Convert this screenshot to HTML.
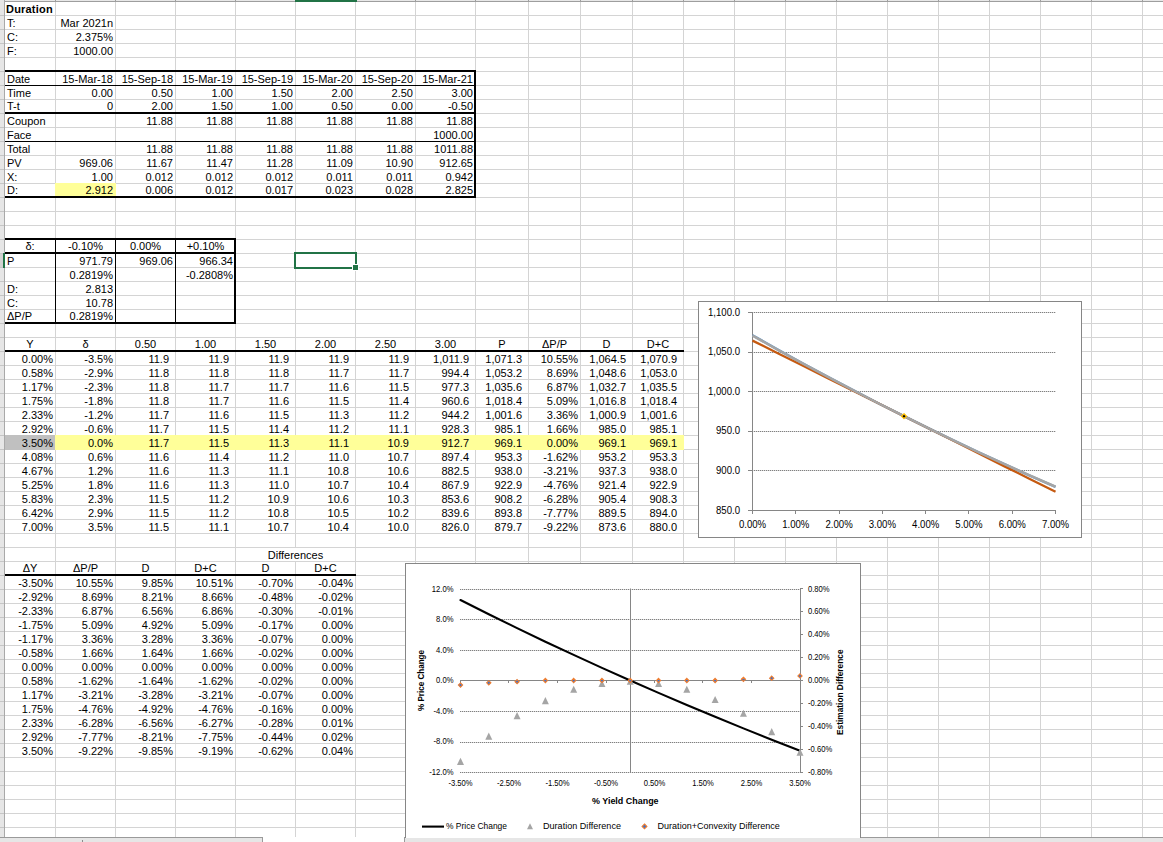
<!DOCTYPE html>
<html><head><meta charset="utf-8"><title>Duration</title>
<style>
html,body{margin:0;padding:0;background:#fff;}
body{width:1163px;height:842px;overflow:hidden;position:relative;}
svg.g{position:absolute;left:0;top:0;}
.t{position:absolute;font-family:"Liberation Sans",sans-serif;font-size:11px;line-height:14px;height:14px;white-space:nowrap;color:#000;}
.ch{position:absolute;}
.ch text{font-family:"Liberation Sans",sans-serif;}
</style></head><body>
<svg class="g" width="1163" height="842" shape-rendering="crispEdges">
<rect x="0" y="0" width="1163" height="1" fill="#e8e8e8"/><rect x="0" y="1" width="1163" height="1" fill="#9e9e9e"/><rect x="55" y="2" width="1" height="835" fill="#d4d4d4"/><rect x="55" y="0" width="1" height="1" fill="#9e9e9e"/><rect x="115" y="2" width="1" height="835" fill="#d4d4d4"/><rect x="115" y="0" width="1" height="1" fill="#9e9e9e"/><rect x="175" y="2" width="1" height="835" fill="#d4d4d4"/><rect x="175" y="0" width="1" height="1" fill="#9e9e9e"/><rect x="235" y="2" width="1" height="835" fill="#d4d4d4"/><rect x="235" y="0" width="1" height="1" fill="#9e9e9e"/><rect x="295" y="2" width="1" height="835" fill="#d4d4d4"/><rect x="295" y="0" width="1" height="1" fill="#9e9e9e"/><rect x="355" y="2" width="1" height="835" fill="#d4d4d4"/><rect x="355" y="0" width="1" height="1" fill="#9e9e9e"/><rect x="415" y="2" width="1" height="835" fill="#d4d4d4"/><rect x="415" y="0" width="1" height="1" fill="#9e9e9e"/><rect x="475" y="2" width="1" height="835" fill="#d4d4d4"/><rect x="475" y="0" width="1" height="1" fill="#9e9e9e"/><rect x="528" y="2" width="1" height="835" fill="#d4d4d4"/><rect x="528" y="0" width="1" height="1" fill="#9e9e9e"/><rect x="580" y="2" width="1" height="835" fill="#d4d4d4"/><rect x="580" y="0" width="1" height="1" fill="#9e9e9e"/><rect x="632" y="2" width="1" height="835" fill="#d4d4d4"/><rect x="632" y="0" width="1" height="1" fill="#9e9e9e"/><rect x="683" y="2" width="1" height="835" fill="#d4d4d4"/><rect x="683" y="0" width="1" height="1" fill="#9e9e9e"/><rect x="734" y="2" width="1" height="835" fill="#d4d4d4"/><rect x="734" y="0" width="1" height="1" fill="#9e9e9e"/><rect x="785" y="2" width="1" height="835" fill="#d4d4d4"/><rect x="785" y="0" width="1" height="1" fill="#9e9e9e"/><rect x="836" y="2" width="1" height="835" fill="#d4d4d4"/><rect x="836" y="0" width="1" height="1" fill="#9e9e9e"/><rect x="887" y="2" width="1" height="835" fill="#d4d4d4"/><rect x="887" y="0" width="1" height="1" fill="#9e9e9e"/><rect x="938" y="2" width="1" height="835" fill="#d4d4d4"/><rect x="938" y="0" width="1" height="1" fill="#9e9e9e"/><rect x="989" y="2" width="1" height="835" fill="#d4d4d4"/><rect x="989" y="0" width="1" height="1" fill="#9e9e9e"/><rect x="1040" y="2" width="1" height="835" fill="#d4d4d4"/><rect x="1040" y="0" width="1" height="1" fill="#9e9e9e"/><rect x="1091" y="2" width="1" height="835" fill="#d4d4d4"/><rect x="1091" y="0" width="1" height="1" fill="#9e9e9e"/><rect x="1142" y="2" width="1" height="835" fill="#d4d4d4"/><rect x="1142" y="0" width="1" height="1" fill="#9e9e9e"/><rect x="5" y="15" width="1158" height="1" fill="#d4d4d4"/><rect x="5" y="29" width="1158" height="1" fill="#d4d4d4"/><rect x="5" y="43" width="1158" height="1" fill="#d4d4d4"/><rect x="5" y="57" width="1158" height="1" fill="#d4d4d4"/><rect x="5" y="71" width="1158" height="1" fill="#d4d4d4"/><rect x="5" y="85" width="1158" height="1" fill="#d4d4d4"/><rect x="5" y="99" width="1158" height="1" fill="#d4d4d4"/><rect x="5" y="113" width="1158" height="1" fill="#d4d4d4"/><rect x="5" y="127" width="1158" height="1" fill="#d4d4d4"/><rect x="5" y="141" width="1158" height="1" fill="#d4d4d4"/><rect x="5" y="155" width="1158" height="1" fill="#d4d4d4"/><rect x="5" y="169" width="1158" height="1" fill="#d4d4d4"/><rect x="5" y="183" width="1158" height="1" fill="#d4d4d4"/><rect x="5" y="197" width="1158" height="1" fill="#d4d4d4"/><rect x="5" y="211" width="1158" height="1" fill="#d4d4d4"/><rect x="5" y="225" width="1158" height="1" fill="#d4d4d4"/><rect x="5" y="239" width="1158" height="1" fill="#d4d4d4"/><rect x="5" y="253" width="1158" height="1" fill="#d4d4d4"/><rect x="5" y="267" width="1158" height="1" fill="#d4d4d4"/><rect x="5" y="281" width="1158" height="1" fill="#d4d4d4"/><rect x="5" y="295" width="1158" height="1" fill="#d4d4d4"/><rect x="5" y="309" width="1158" height="1" fill="#d4d4d4"/><rect x="5" y="323" width="1158" height="1" fill="#d4d4d4"/><rect x="5" y="337" width="1158" height="1" fill="#d4d4d4"/><rect x="5" y="351" width="1158" height="1" fill="#d4d4d4"/><rect x="5" y="365" width="1158" height="1" fill="#d4d4d4"/><rect x="5" y="379" width="1158" height="1" fill="#d4d4d4"/><rect x="5" y="393" width="1158" height="1" fill="#d4d4d4"/><rect x="5" y="407" width="1158" height="1" fill="#d4d4d4"/><rect x="5" y="421" width="1158" height="1" fill="#d4d4d4"/><rect x="5" y="435" width="1158" height="1" fill="#d4d4d4"/><rect x="5" y="449" width="1158" height="1" fill="#d4d4d4"/><rect x="5" y="463" width="1158" height="1" fill="#d4d4d4"/><rect x="5" y="477" width="1158" height="1" fill="#d4d4d4"/><rect x="5" y="491" width="1158" height="1" fill="#d4d4d4"/><rect x="5" y="505" width="1158" height="1" fill="#d4d4d4"/><rect x="5" y="519" width="1158" height="1" fill="#d4d4d4"/><rect x="5" y="533" width="1158" height="1" fill="#d4d4d4"/><rect x="5" y="547" width="1158" height="1" fill="#d4d4d4"/><rect x="5" y="561" width="1158" height="1" fill="#d4d4d4"/><rect x="5" y="575" width="1158" height="1" fill="#d4d4d4"/><rect x="5" y="589" width="1158" height="1" fill="#d4d4d4"/><rect x="5" y="603" width="1158" height="1" fill="#d4d4d4"/><rect x="5" y="617" width="1158" height="1" fill="#d4d4d4"/><rect x="5" y="631" width="1158" height="1" fill="#d4d4d4"/><rect x="5" y="645" width="1158" height="1" fill="#d4d4d4"/><rect x="5" y="659" width="1158" height="1" fill="#d4d4d4"/><rect x="5" y="673" width="1158" height="1" fill="#d4d4d4"/><rect x="5" y="687" width="1158" height="1" fill="#d4d4d4"/><rect x="5" y="701" width="1158" height="1" fill="#d4d4d4"/><rect x="5" y="715" width="1158" height="1" fill="#d4d4d4"/><rect x="5" y="729" width="1158" height="1" fill="#d4d4d4"/><rect x="5" y="743" width="1158" height="1" fill="#d4d4d4"/><rect x="5" y="757" width="1158" height="1" fill="#d4d4d4"/><rect x="5" y="771" width="1158" height="1" fill="#d4d4d4"/><rect x="5" y="785" width="1158" height="1" fill="#d4d4d4"/><rect x="5" y="799" width="1158" height="1" fill="#d4d4d4"/><rect x="5" y="813" width="1158" height="1" fill="#d4d4d4"/><rect x="5" y="827" width="1158" height="1" fill="#d4d4d4"/><rect x="0" y="0" width="4" height="837" fill="#e6e6e6"/><rect x="0" y="253" width="3" height="15" fill="#d2d2d2"/><rect x="0" y="15" width="4" height="1" fill="#c6c6c6"/><rect x="0" y="29" width="4" height="1" fill="#c6c6c6"/><rect x="0" y="43" width="4" height="1" fill="#c6c6c6"/><rect x="0" y="57" width="4" height="1" fill="#c6c6c6"/><rect x="0" y="71" width="4" height="1" fill="#c6c6c6"/><rect x="0" y="85" width="4" height="1" fill="#c6c6c6"/><rect x="0" y="99" width="4" height="1" fill="#c6c6c6"/><rect x="0" y="113" width="4" height="1" fill="#c6c6c6"/><rect x="0" y="127" width="4" height="1" fill="#c6c6c6"/><rect x="0" y="141" width="4" height="1" fill="#c6c6c6"/><rect x="0" y="155" width="4" height="1" fill="#c6c6c6"/><rect x="0" y="169" width="4" height="1" fill="#c6c6c6"/><rect x="0" y="183" width="4" height="1" fill="#c6c6c6"/><rect x="0" y="197" width="4" height="1" fill="#c6c6c6"/><rect x="0" y="211" width="4" height="1" fill="#c6c6c6"/><rect x="0" y="225" width="4" height="1" fill="#c6c6c6"/><rect x="0" y="239" width="4" height="1" fill="#c6c6c6"/><rect x="0" y="253" width="4" height="1" fill="#c6c6c6"/><rect x="0" y="267" width="4" height="1" fill="#c6c6c6"/><rect x="0" y="281" width="4" height="1" fill="#c6c6c6"/><rect x="0" y="295" width="4" height="1" fill="#c6c6c6"/><rect x="0" y="309" width="4" height="1" fill="#c6c6c6"/><rect x="0" y="323" width="4" height="1" fill="#c6c6c6"/><rect x="0" y="337" width="4" height="1" fill="#c6c6c6"/><rect x="0" y="351" width="4" height="1" fill="#c6c6c6"/><rect x="0" y="365" width="4" height="1" fill="#c6c6c6"/><rect x="0" y="379" width="4" height="1" fill="#c6c6c6"/><rect x="0" y="393" width="4" height="1" fill="#c6c6c6"/><rect x="0" y="407" width="4" height="1" fill="#c6c6c6"/><rect x="0" y="421" width="4" height="1" fill="#c6c6c6"/><rect x="0" y="435" width="4" height="1" fill="#c6c6c6"/><rect x="0" y="449" width="4" height="1" fill="#c6c6c6"/><rect x="0" y="463" width="4" height="1" fill="#c6c6c6"/><rect x="0" y="477" width="4" height="1" fill="#c6c6c6"/><rect x="0" y="491" width="4" height="1" fill="#c6c6c6"/><rect x="0" y="505" width="4" height="1" fill="#c6c6c6"/><rect x="0" y="519" width="4" height="1" fill="#c6c6c6"/><rect x="0" y="533" width="4" height="1" fill="#c6c6c6"/><rect x="0" y="547" width="4" height="1" fill="#c6c6c6"/><rect x="0" y="561" width="4" height="1" fill="#c6c6c6"/><rect x="0" y="575" width="4" height="1" fill="#c6c6c6"/><rect x="0" y="589" width="4" height="1" fill="#c6c6c6"/><rect x="0" y="603" width="4" height="1" fill="#c6c6c6"/><rect x="0" y="617" width="4" height="1" fill="#c6c6c6"/><rect x="0" y="631" width="4" height="1" fill="#c6c6c6"/><rect x="0" y="645" width="4" height="1" fill="#c6c6c6"/><rect x="0" y="659" width="4" height="1" fill="#c6c6c6"/><rect x="0" y="673" width="4" height="1" fill="#c6c6c6"/><rect x="0" y="687" width="4" height="1" fill="#c6c6c6"/><rect x="0" y="701" width="4" height="1" fill="#c6c6c6"/><rect x="0" y="715" width="4" height="1" fill="#c6c6c6"/><rect x="0" y="729" width="4" height="1" fill="#c6c6c6"/><rect x="0" y="743" width="4" height="1" fill="#c6c6c6"/><rect x="0" y="757" width="4" height="1" fill="#c6c6c6"/><rect x="0" y="771" width="4" height="1" fill="#c6c6c6"/><rect x="0" y="785" width="4" height="1" fill="#c6c6c6"/><rect x="0" y="799" width="4" height="1" fill="#c6c6c6"/><rect x="0" y="813" width="4" height="1" fill="#c6c6c6"/><rect x="0" y="827" width="4" height="1" fill="#c6c6c6"/><rect x="4" y="0" width="1" height="837" fill="#a9a9a9"/><rect x="3" y="253" width="2" height="15" fill="#217346"/><rect x="295" y="0" width="62" height="2" fill="#217346"/><rect x="55" y="183" width="61" height="15" fill="#ffff99"/><rect x="5" y="435" width="50" height="15" fill="#c0c0c0"/><rect x="55" y="435" width="629" height="15" fill="#ffff99"/><rect x="5" y="70" width="471" height="2" fill="#000"/><rect x="5" y="85" width="471" height="1" fill="#000"/><rect x="5" y="112" width="471" height="2" fill="#000"/><rect x="5" y="141" width="471" height="1" fill="#000"/><rect x="5" y="196" width="471" height="2" fill="#000"/><rect x="474" y="70" width="2" height="128" fill="#000"/><rect x="5" y="238" width="231" height="2" fill="#000"/><rect x="5" y="252" width="231" height="2" fill="#000"/><rect x="5" y="322" width="231" height="2" fill="#000"/><rect x="234" y="238" width="2" height="86" fill="#000"/><rect x="55" y="239" width="1" height="84" fill="#000"/><rect x="115" y="239" width="1" height="84" fill="#000"/><rect x="175" y="239" width="1" height="84" fill="#000"/><rect x="294" y="252" width="63" height="2" fill="#217346"/><rect x="294" y="252" width="2" height="17" fill="#217346"/><rect x="355" y="252" width="2" height="12" fill="#217346"/><rect x="294" y="267" width="58" height="2" fill="#217346"/><rect x="352" y="264" width="7" height="7" fill="#ffffff"/><rect x="353" y="265" width="5" height="5" fill="#217346"/><rect x="5" y="350" width="679" height="2" fill="#000"/><rect x="295" y="548" width="1" height="13" fill="#ffffff"/><rect x="5" y="574" width="351" height="2" fill="#000"/><rect x="0" y="837" width="1163" height="5" fill="#ffffff"/><rect x="0" y="837" width="263" height="5" fill="#e6e6e6"/><rect x="0" y="837" width="263" height="1" fill="#9a9a9a"/><rect x="262" y="837" width="1" height="5" fill="#9a9a9a"/><rect x="404" y="837" width="759" height="5" fill="#e6e6e6"/><rect x="404" y="837" width="759" height="1" fill="#9a9a9a"/><rect x="404" y="837" width="1" height="5" fill="#9a9a9a"/><rect x="82" y="840" width="1" height="2" fill="#8c8c8c"/>
</svg>
<div class="t" style="left:7px;top:2px;width:51px;text-align:left;font-weight:bold;letter-spacing:0.2px;left:6px;">Duration</div><div class="t" style="left:7px;top:16px;width:51px;text-align:left;">T:</div><div class="t" style="left:56px;top:16px;width:57px;text-align:right;">Mar 2021n</div><div class="t" style="left:7px;top:30px;width:51px;text-align:left;">C:</div><div class="t" style="left:56px;top:30px;width:57px;text-align:right;">2.375%</div><div class="t" style="left:7px;top:44px;width:51px;text-align:left;">F:</div><div class="t" style="left:56px;top:44px;width:57px;text-align:right;">1000.00</div><div class="t" style="left:7px;top:72px;width:51px;text-align:left;">Date</div><div class="t" style="left:56px;top:72px;width:57px;text-align:right;">15-Mar-18</div><div class="t" style="left:116px;top:72px;width:57px;text-align:right;">15-Sep-18</div><div class="t" style="left:176px;top:72px;width:57px;text-align:right;">15-Mar-19</div><div class="t" style="left:236px;top:72px;width:57px;text-align:right;">15-Sep-19</div><div class="t" style="left:296px;top:72px;width:57px;text-align:right;">15-Mar-20</div><div class="t" style="left:356px;top:72px;width:57px;text-align:right;">15-Sep-20</div><div class="t" style="left:416px;top:72px;width:57px;text-align:right;">15-Mar-21</div><div class="t" style="left:7px;top:86px;width:51px;text-align:left;">Time</div><div class="t" style="left:56px;top:86px;width:57px;text-align:right;">0.00</div><div class="t" style="left:116px;top:86px;width:57px;text-align:right;">0.50</div><div class="t" style="left:176px;top:86px;width:57px;text-align:right;">1.00</div><div class="t" style="left:236px;top:86px;width:57px;text-align:right;">1.50</div><div class="t" style="left:296px;top:86px;width:57px;text-align:right;">2.00</div><div class="t" style="left:356px;top:86px;width:57px;text-align:right;">2.50</div><div class="t" style="left:416px;top:86px;width:57px;text-align:right;">3.00</div><div class="t" style="left:7px;top:99px;width:51px;text-align:left;">T-t</div><div class="t" style="left:56px;top:99px;width:57px;text-align:right;">0</div><div class="t" style="left:116px;top:99px;width:57px;text-align:right;">2.00</div><div class="t" style="left:176px;top:99px;width:57px;text-align:right;">1.50</div><div class="t" style="left:236px;top:99px;width:57px;text-align:right;">1.00</div><div class="t" style="left:296px;top:99px;width:57px;text-align:right;">0.50</div><div class="t" style="left:356px;top:99px;width:57px;text-align:right;">0.00</div><div class="t" style="left:416px;top:99px;width:57px;text-align:right;">-0.50</div><div class="t" style="left:7px;top:114px;width:51px;text-align:left;">Coupon</div><div class="t" style="left:116px;top:114px;width:57px;text-align:right;">11.88</div><div class="t" style="left:176px;top:114px;width:57px;text-align:right;">11.88</div><div class="t" style="left:236px;top:114px;width:57px;text-align:right;">11.88</div><div class="t" style="left:296px;top:114px;width:57px;text-align:right;">11.88</div><div class="t" style="left:356px;top:114px;width:57px;text-align:right;">11.88</div><div class="t" style="left:416px;top:114px;width:57px;text-align:right;">11.88</div><div class="t" style="left:7px;top:128px;width:51px;text-align:left;">Face</div><div class="t" style="left:416px;top:128px;width:57px;text-align:right;">1000.00</div><div class="t" style="left:7px;top:142px;width:51px;text-align:left;">Total</div><div class="t" style="left:116px;top:142px;width:57px;text-align:right;">11.88</div><div class="t" style="left:176px;top:142px;width:57px;text-align:right;">11.88</div><div class="t" style="left:236px;top:142px;width:57px;text-align:right;">11.88</div><div class="t" style="left:296px;top:142px;width:57px;text-align:right;">11.88</div><div class="t" style="left:356px;top:142px;width:57px;text-align:right;">11.88</div><div class="t" style="left:416px;top:142px;width:57px;text-align:right;">1011.88</div><div class="t" style="left:7px;top:156px;width:51px;text-align:left;">PV</div><div class="t" style="left:56px;top:156px;width:57px;text-align:right;">969.06</div><div class="t" style="left:116px;top:156px;width:57px;text-align:right;">11.67</div><div class="t" style="left:176px;top:156px;width:57px;text-align:right;">11.47</div><div class="t" style="left:236px;top:156px;width:57px;text-align:right;">11.28</div><div class="t" style="left:296px;top:156px;width:57px;text-align:right;">11.09</div><div class="t" style="left:356px;top:156px;width:57px;text-align:right;">10.90</div><div class="t" style="left:416px;top:156px;width:57px;text-align:right;">912.65</div><div class="t" style="left:7px;top:170px;width:51px;text-align:left;">X:</div><div class="t" style="left:56px;top:170px;width:57px;text-align:right;">1.00</div><div class="t" style="left:116px;top:170px;width:57px;text-align:right;">0.012</div><div class="t" style="left:176px;top:170px;width:57px;text-align:right;">0.012</div><div class="t" style="left:236px;top:170px;width:57px;text-align:right;">0.012</div><div class="t" style="left:296px;top:170px;width:57px;text-align:right;">0.011</div><div class="t" style="left:356px;top:170px;width:57px;text-align:right;">0.011</div><div class="t" style="left:416px;top:170px;width:57px;text-align:right;">0.942</div><div class="t" style="left:7px;top:183px;width:51px;text-align:left;">D:</div><div class="t" style="left:56px;top:183px;width:57px;text-align:right;">2.912</div><div class="t" style="left:116px;top:183px;width:57px;text-align:right;">0.006</div><div class="t" style="left:176px;top:183px;width:57px;text-align:right;">0.012</div><div class="t" style="left:236px;top:183px;width:57px;text-align:right;">0.017</div><div class="t" style="left:296px;top:183px;width:57px;text-align:right;">0.023</div><div class="t" style="left:356px;top:183px;width:57px;text-align:right;">0.028</div><div class="t" style="left:416px;top:183px;width:57px;text-align:right;">2.825</div><div class="t" style="left:5px;top:239px;width:50px;text-align:center;">&#948;:</div><div class="t" style="left:56px;top:239px;width:59px;text-align:center;">-0.10%</div><div class="t" style="left:116px;top:239px;width:59px;text-align:center;">0.00%</div><div class="t" style="left:176px;top:239px;width:59px;text-align:center;">+0.10%</div><div class="t" style="left:7px;top:254px;width:51px;text-align:left;">P</div><div class="t" style="left:56px;top:254px;width:57px;text-align:right;">971.79</div><div class="t" style="left:116px;top:254px;width:57px;text-align:right;">969.06</div><div class="t" style="left:176px;top:254px;width:57px;text-align:right;">966.34</div><div class="t" style="left:56px;top:268px;width:57px;text-align:right;">0.2819%</div><div class="t" style="left:176px;top:268px;width:57px;text-align:right;">-0.2808%</div><div class="t" style="left:7px;top:282px;width:51px;text-align:left;">D:</div><div class="t" style="left:56px;top:282px;width:57px;text-align:right;">2.813</div><div class="t" style="left:7px;top:296px;width:51px;text-align:left;">C:</div><div class="t" style="left:56px;top:296px;width:57px;text-align:right;">10.78</div><div class="t" style="left:7px;top:309px;width:51px;text-align:left;">&#916;P/P</div><div class="t" style="left:56px;top:309px;width:57px;text-align:right;">0.2819%</div><div class="t" style="left:5px;top:337px;width:50px;text-align:center;">Y</div><div class="t" style="left:56px;top:337px;width:59px;text-align:center;">&#948;</div><div class="t" style="left:116px;top:337px;width:59px;text-align:center;">0.50</div><div class="t" style="left:176px;top:337px;width:59px;text-align:center;">1.00</div><div class="t" style="left:236px;top:337px;width:59px;text-align:center;">1.50</div><div class="t" style="left:296px;top:337px;width:59px;text-align:center;">2.00</div><div class="t" style="left:356px;top:337px;width:59px;text-align:center;">2.50</div><div class="t" style="left:416px;top:337px;width:59px;text-align:center;">3.00</div><div class="t" style="left:476px;top:337px;width:52px;text-align:center;">P</div><div class="t" style="left:529px;top:337px;width:51px;text-align:center;">&#916;P/P</div><div class="t" style="left:581px;top:337px;width:51px;text-align:center;">D</div><div class="t" style="left:633px;top:337px;width:50px;text-align:center;">D+C</div><div class="t" style="left:5px;top:352px;width:48px;text-align:right;">0.00%</div><div class="t" style="left:56px;top:352px;width:57px;text-align:right;">-3.5%</div><div class="t" style="left:116px;top:352px;width:53px;text-align:right;">11.9</div><div class="t" style="left:176px;top:352px;width:53px;text-align:right;">11.9</div><div class="t" style="left:236px;top:352px;width:53px;text-align:right;">11.9</div><div class="t" style="left:296px;top:352px;width:53px;text-align:right;">11.9</div><div class="t" style="left:356px;top:352px;width:53px;text-align:right;">11.9</div><div class="t" style="left:416px;top:352px;width:53px;text-align:right;">1,011.9</div><div class="t" style="left:476px;top:352px;width:46px;text-align:right;">1,071.3</div><div class="t" style="left:529px;top:352px;width:49px;text-align:right;">10.55%</div><div class="t" style="left:581px;top:352px;width:45px;text-align:right;">1,064.5</div><div class="t" style="left:633px;top:352px;width:44px;text-align:right;">1,070.9</div><div class="t" style="left:5px;top:366px;width:48px;text-align:right;">0.58%</div><div class="t" style="left:56px;top:366px;width:57px;text-align:right;">-2.9%</div><div class="t" style="left:116px;top:366px;width:53px;text-align:right;">11.8</div><div class="t" style="left:176px;top:366px;width:53px;text-align:right;">11.8</div><div class="t" style="left:236px;top:366px;width:53px;text-align:right;">11.8</div><div class="t" style="left:296px;top:366px;width:53px;text-align:right;">11.7</div><div class="t" style="left:356px;top:366px;width:53px;text-align:right;">11.7</div><div class="t" style="left:416px;top:366px;width:53px;text-align:right;">994.4</div><div class="t" style="left:476px;top:366px;width:46px;text-align:right;">1,053.2</div><div class="t" style="left:529px;top:366px;width:49px;text-align:right;">8.69%</div><div class="t" style="left:581px;top:366px;width:45px;text-align:right;">1,048.6</div><div class="t" style="left:633px;top:366px;width:44px;text-align:right;">1,053.0</div><div class="t" style="left:5px;top:380px;width:48px;text-align:right;">1.17%</div><div class="t" style="left:56px;top:380px;width:57px;text-align:right;">-2.3%</div><div class="t" style="left:116px;top:380px;width:53px;text-align:right;">11.8</div><div class="t" style="left:176px;top:380px;width:53px;text-align:right;">11.7</div><div class="t" style="left:236px;top:380px;width:53px;text-align:right;">11.7</div><div class="t" style="left:296px;top:380px;width:53px;text-align:right;">11.6</div><div class="t" style="left:356px;top:380px;width:53px;text-align:right;">11.5</div><div class="t" style="left:416px;top:380px;width:53px;text-align:right;">977.3</div><div class="t" style="left:476px;top:380px;width:46px;text-align:right;">1,035.6</div><div class="t" style="left:529px;top:380px;width:49px;text-align:right;">6.87%</div><div class="t" style="left:581px;top:380px;width:45px;text-align:right;">1,032.7</div><div class="t" style="left:633px;top:380px;width:44px;text-align:right;">1,035.5</div><div class="t" style="left:5px;top:394px;width:48px;text-align:right;">1.75%</div><div class="t" style="left:56px;top:394px;width:57px;text-align:right;">-1.8%</div><div class="t" style="left:116px;top:394px;width:53px;text-align:right;">11.8</div><div class="t" style="left:176px;top:394px;width:53px;text-align:right;">11.7</div><div class="t" style="left:236px;top:394px;width:53px;text-align:right;">11.6</div><div class="t" style="left:296px;top:394px;width:53px;text-align:right;">11.5</div><div class="t" style="left:356px;top:394px;width:53px;text-align:right;">11.4</div><div class="t" style="left:416px;top:394px;width:53px;text-align:right;">960.6</div><div class="t" style="left:476px;top:394px;width:46px;text-align:right;">1,018.4</div><div class="t" style="left:529px;top:394px;width:49px;text-align:right;">5.09%</div><div class="t" style="left:581px;top:394px;width:45px;text-align:right;">1,016.8</div><div class="t" style="left:633px;top:394px;width:44px;text-align:right;">1,018.4</div><div class="t" style="left:5px;top:408px;width:48px;text-align:right;">2.33%</div><div class="t" style="left:56px;top:408px;width:57px;text-align:right;">-1.2%</div><div class="t" style="left:116px;top:408px;width:53px;text-align:right;">11.7</div><div class="t" style="left:176px;top:408px;width:53px;text-align:right;">11.6</div><div class="t" style="left:236px;top:408px;width:53px;text-align:right;">11.5</div><div class="t" style="left:296px;top:408px;width:53px;text-align:right;">11.3</div><div class="t" style="left:356px;top:408px;width:53px;text-align:right;">11.2</div><div class="t" style="left:416px;top:408px;width:53px;text-align:right;">944.2</div><div class="t" style="left:476px;top:408px;width:46px;text-align:right;">1,001.6</div><div class="t" style="left:529px;top:408px;width:49px;text-align:right;">3.36%</div><div class="t" style="left:581px;top:408px;width:45px;text-align:right;">1,000.9</div><div class="t" style="left:633px;top:408px;width:44px;text-align:right;">1,001.6</div><div class="t" style="left:5px;top:422px;width:48px;text-align:right;">2.92%</div><div class="t" style="left:56px;top:422px;width:57px;text-align:right;">-0.6%</div><div class="t" style="left:116px;top:422px;width:53px;text-align:right;">11.7</div><div class="t" style="left:176px;top:422px;width:53px;text-align:right;">11.5</div><div class="t" style="left:236px;top:422px;width:53px;text-align:right;">11.4</div><div class="t" style="left:296px;top:422px;width:53px;text-align:right;">11.2</div><div class="t" style="left:356px;top:422px;width:53px;text-align:right;">11.1</div><div class="t" style="left:416px;top:422px;width:53px;text-align:right;">928.3</div><div class="t" style="left:476px;top:422px;width:46px;text-align:right;">985.1</div><div class="t" style="left:529px;top:422px;width:49px;text-align:right;">1.66%</div><div class="t" style="left:581px;top:422px;width:45px;text-align:right;">985.0</div><div class="t" style="left:633px;top:422px;width:44px;text-align:right;">985.1</div><div class="t" style="left:5px;top:436px;width:48px;text-align:right;">3.50%</div><div class="t" style="left:56px;top:436px;width:57px;text-align:right;">0.0%</div><div class="t" style="left:116px;top:436px;width:53px;text-align:right;">11.7</div><div class="t" style="left:176px;top:436px;width:53px;text-align:right;">11.5</div><div class="t" style="left:236px;top:436px;width:53px;text-align:right;">11.3</div><div class="t" style="left:296px;top:436px;width:53px;text-align:right;">11.1</div><div class="t" style="left:356px;top:436px;width:53px;text-align:right;">10.9</div><div class="t" style="left:416px;top:436px;width:53px;text-align:right;">912.7</div><div class="t" style="left:476px;top:436px;width:46px;text-align:right;">969.1</div><div class="t" style="left:529px;top:436px;width:49px;text-align:right;">0.00%</div><div class="t" style="left:581px;top:436px;width:45px;text-align:right;">969.1</div><div class="t" style="left:633px;top:436px;width:44px;text-align:right;">969.1</div><div class="t" style="left:5px;top:450px;width:48px;text-align:right;">4.08%</div><div class="t" style="left:56px;top:450px;width:57px;text-align:right;">0.6%</div><div class="t" style="left:116px;top:450px;width:53px;text-align:right;">11.6</div><div class="t" style="left:176px;top:450px;width:53px;text-align:right;">11.4</div><div class="t" style="left:236px;top:450px;width:53px;text-align:right;">11.2</div><div class="t" style="left:296px;top:450px;width:53px;text-align:right;">11.0</div><div class="t" style="left:356px;top:450px;width:53px;text-align:right;">10.7</div><div class="t" style="left:416px;top:450px;width:53px;text-align:right;">897.4</div><div class="t" style="left:476px;top:450px;width:46px;text-align:right;">953.3</div><div class="t" style="left:529px;top:450px;width:49px;text-align:right;">-1.62%</div><div class="t" style="left:581px;top:450px;width:45px;text-align:right;">953.2</div><div class="t" style="left:633px;top:450px;width:44px;text-align:right;">953.3</div><div class="t" style="left:5px;top:464px;width:48px;text-align:right;">4.67%</div><div class="t" style="left:56px;top:464px;width:57px;text-align:right;">1.2%</div><div class="t" style="left:116px;top:464px;width:53px;text-align:right;">11.6</div><div class="t" style="left:176px;top:464px;width:53px;text-align:right;">11.3</div><div class="t" style="left:236px;top:464px;width:53px;text-align:right;">11.1</div><div class="t" style="left:296px;top:464px;width:53px;text-align:right;">10.8</div><div class="t" style="left:356px;top:464px;width:53px;text-align:right;">10.6</div><div class="t" style="left:416px;top:464px;width:53px;text-align:right;">882.5</div><div class="t" style="left:476px;top:464px;width:46px;text-align:right;">938.0</div><div class="t" style="left:529px;top:464px;width:49px;text-align:right;">-3.21%</div><div class="t" style="left:581px;top:464px;width:45px;text-align:right;">937.3</div><div class="t" style="left:633px;top:464px;width:44px;text-align:right;">938.0</div><div class="t" style="left:5px;top:478px;width:48px;text-align:right;">5.25%</div><div class="t" style="left:56px;top:478px;width:57px;text-align:right;">1.8%</div><div class="t" style="left:116px;top:478px;width:53px;text-align:right;">11.6</div><div class="t" style="left:176px;top:478px;width:53px;text-align:right;">11.3</div><div class="t" style="left:236px;top:478px;width:53px;text-align:right;">11.0</div><div class="t" style="left:296px;top:478px;width:53px;text-align:right;">10.7</div><div class="t" style="left:356px;top:478px;width:53px;text-align:right;">10.4</div><div class="t" style="left:416px;top:478px;width:53px;text-align:right;">867.9</div><div class="t" style="left:476px;top:478px;width:46px;text-align:right;">922.9</div><div class="t" style="left:529px;top:478px;width:49px;text-align:right;">-4.76%</div><div class="t" style="left:581px;top:478px;width:45px;text-align:right;">921.4</div><div class="t" style="left:633px;top:478px;width:44px;text-align:right;">922.9</div><div class="t" style="left:5px;top:492px;width:48px;text-align:right;">5.83%</div><div class="t" style="left:56px;top:492px;width:57px;text-align:right;">2.3%</div><div class="t" style="left:116px;top:492px;width:53px;text-align:right;">11.5</div><div class="t" style="left:176px;top:492px;width:53px;text-align:right;">11.2</div><div class="t" style="left:236px;top:492px;width:53px;text-align:right;">10.9</div><div class="t" style="left:296px;top:492px;width:53px;text-align:right;">10.6</div><div class="t" style="left:356px;top:492px;width:53px;text-align:right;">10.3</div><div class="t" style="left:416px;top:492px;width:53px;text-align:right;">853.6</div><div class="t" style="left:476px;top:492px;width:46px;text-align:right;">908.2</div><div class="t" style="left:529px;top:492px;width:49px;text-align:right;">-6.28%</div><div class="t" style="left:581px;top:492px;width:45px;text-align:right;">905.4</div><div class="t" style="left:633px;top:492px;width:44px;text-align:right;">908.3</div><div class="t" style="left:5px;top:506px;width:48px;text-align:right;">6.42%</div><div class="t" style="left:56px;top:506px;width:57px;text-align:right;">2.9%</div><div class="t" style="left:116px;top:506px;width:53px;text-align:right;">11.5</div><div class="t" style="left:176px;top:506px;width:53px;text-align:right;">11.2</div><div class="t" style="left:236px;top:506px;width:53px;text-align:right;">10.8</div><div class="t" style="left:296px;top:506px;width:53px;text-align:right;">10.5</div><div class="t" style="left:356px;top:506px;width:53px;text-align:right;">10.2</div><div class="t" style="left:416px;top:506px;width:53px;text-align:right;">839.6</div><div class="t" style="left:476px;top:506px;width:46px;text-align:right;">893.8</div><div class="t" style="left:529px;top:506px;width:49px;text-align:right;">-7.77%</div><div class="t" style="left:581px;top:506px;width:45px;text-align:right;">889.5</div><div class="t" style="left:633px;top:506px;width:44px;text-align:right;">894.0</div><div class="t" style="left:5px;top:520px;width:48px;text-align:right;">7.00%</div><div class="t" style="left:56px;top:520px;width:57px;text-align:right;">3.5%</div><div class="t" style="left:116px;top:520px;width:53px;text-align:right;">11.5</div><div class="t" style="left:176px;top:520px;width:53px;text-align:right;">11.1</div><div class="t" style="left:236px;top:520px;width:53px;text-align:right;">10.7</div><div class="t" style="left:296px;top:520px;width:53px;text-align:right;">10.4</div><div class="t" style="left:356px;top:520px;width:53px;text-align:right;">10.0</div><div class="t" style="left:416px;top:520px;width:53px;text-align:right;">826.0</div><div class="t" style="left:476px;top:520px;width:46px;text-align:right;">879.7</div><div class="t" style="left:529px;top:520px;width:49px;text-align:right;">-9.22%</div><div class="t" style="left:581px;top:520px;width:45px;text-align:right;">873.6</div><div class="t" style="left:633px;top:520px;width:44px;text-align:right;">880.0</div><div class="t" style="left:236px;top:548px;width:119px;text-align:center;">Differences</div><div class="t" style="left:5px;top:561px;width:50px;text-align:center;">&#916;Y</div><div class="t" style="left:56px;top:561px;width:59px;text-align:center;">&#916;P/P</div><div class="t" style="left:116px;top:561px;width:59px;text-align:center;">D</div><div class="t" style="left:176px;top:561px;width:59px;text-align:center;">D+C</div><div class="t" style="left:236px;top:561px;width:59px;text-align:center;">D</div><div class="t" style="left:296px;top:561px;width:59px;text-align:center;">D+C</div><div class="t" style="left:5px;top:576px;width:48px;text-align:right;">-3.50%</div><div class="t" style="left:56px;top:576px;width:57px;text-align:right;">10.55%</div><div class="t" style="left:116px;top:576px;width:57px;text-align:right;">9.85%</div><div class="t" style="left:176px;top:576px;width:57px;text-align:right;">10.51%</div><div class="t" style="left:236px;top:576px;width:57px;text-align:right;">-0.70%</div><div class="t" style="left:296px;top:576px;width:57px;text-align:right;">-0.04%</div><div class="t" style="left:5px;top:590px;width:48px;text-align:right;">-2.92%</div><div class="t" style="left:56px;top:590px;width:57px;text-align:right;">8.69%</div><div class="t" style="left:116px;top:590px;width:57px;text-align:right;">8.21%</div><div class="t" style="left:176px;top:590px;width:57px;text-align:right;">8.66%</div><div class="t" style="left:236px;top:590px;width:57px;text-align:right;">-0.48%</div><div class="t" style="left:296px;top:590px;width:57px;text-align:right;">-0.02%</div><div class="t" style="left:5px;top:604px;width:48px;text-align:right;">-2.33%</div><div class="t" style="left:56px;top:604px;width:57px;text-align:right;">6.87%</div><div class="t" style="left:116px;top:604px;width:57px;text-align:right;">6.56%</div><div class="t" style="left:176px;top:604px;width:57px;text-align:right;">6.86%</div><div class="t" style="left:236px;top:604px;width:57px;text-align:right;">-0.30%</div><div class="t" style="left:296px;top:604px;width:57px;text-align:right;">-0.01%</div><div class="t" style="left:5px;top:618px;width:48px;text-align:right;">-1.75%</div><div class="t" style="left:56px;top:618px;width:57px;text-align:right;">5.09%</div><div class="t" style="left:116px;top:618px;width:57px;text-align:right;">4.92%</div><div class="t" style="left:176px;top:618px;width:57px;text-align:right;">5.09%</div><div class="t" style="left:236px;top:618px;width:57px;text-align:right;">-0.17%</div><div class="t" style="left:296px;top:618px;width:57px;text-align:right;">0.00%</div><div class="t" style="left:5px;top:632px;width:48px;text-align:right;">-1.17%</div><div class="t" style="left:56px;top:632px;width:57px;text-align:right;">3.36%</div><div class="t" style="left:116px;top:632px;width:57px;text-align:right;">3.28%</div><div class="t" style="left:176px;top:632px;width:57px;text-align:right;">3.36%</div><div class="t" style="left:236px;top:632px;width:57px;text-align:right;">-0.07%</div><div class="t" style="left:296px;top:632px;width:57px;text-align:right;">0.00%</div><div class="t" style="left:5px;top:646px;width:48px;text-align:right;">-0.58%</div><div class="t" style="left:56px;top:646px;width:57px;text-align:right;">1.66%</div><div class="t" style="left:116px;top:646px;width:57px;text-align:right;">1.64%</div><div class="t" style="left:176px;top:646px;width:57px;text-align:right;">1.66%</div><div class="t" style="left:236px;top:646px;width:57px;text-align:right;">-0.02%</div><div class="t" style="left:296px;top:646px;width:57px;text-align:right;">0.00%</div><div class="t" style="left:5px;top:660px;width:48px;text-align:right;">0.00%</div><div class="t" style="left:56px;top:660px;width:57px;text-align:right;">0.00%</div><div class="t" style="left:116px;top:660px;width:57px;text-align:right;">0.00%</div><div class="t" style="left:176px;top:660px;width:57px;text-align:right;">0.00%</div><div class="t" style="left:236px;top:660px;width:57px;text-align:right;">0.00%</div><div class="t" style="left:296px;top:660px;width:57px;text-align:right;">0.00%</div><div class="t" style="left:5px;top:674px;width:48px;text-align:right;">0.58%</div><div class="t" style="left:56px;top:674px;width:57px;text-align:right;">-1.62%</div><div class="t" style="left:116px;top:674px;width:57px;text-align:right;">-1.64%</div><div class="t" style="left:176px;top:674px;width:57px;text-align:right;">-1.62%</div><div class="t" style="left:236px;top:674px;width:57px;text-align:right;">-0.02%</div><div class="t" style="left:296px;top:674px;width:57px;text-align:right;">0.00%</div><div class="t" style="left:5px;top:688px;width:48px;text-align:right;">1.17%</div><div class="t" style="left:56px;top:688px;width:57px;text-align:right;">-3.21%</div><div class="t" style="left:116px;top:688px;width:57px;text-align:right;">-3.28%</div><div class="t" style="left:176px;top:688px;width:57px;text-align:right;">-3.21%</div><div class="t" style="left:236px;top:688px;width:57px;text-align:right;">-0.07%</div><div class="t" style="left:296px;top:688px;width:57px;text-align:right;">0.00%</div><div class="t" style="left:5px;top:702px;width:48px;text-align:right;">1.75%</div><div class="t" style="left:56px;top:702px;width:57px;text-align:right;">-4.76%</div><div class="t" style="left:116px;top:702px;width:57px;text-align:right;">-4.92%</div><div class="t" style="left:176px;top:702px;width:57px;text-align:right;">-4.76%</div><div class="t" style="left:236px;top:702px;width:57px;text-align:right;">-0.16%</div><div class="t" style="left:296px;top:702px;width:57px;text-align:right;">0.00%</div><div class="t" style="left:5px;top:716px;width:48px;text-align:right;">2.33%</div><div class="t" style="left:56px;top:716px;width:57px;text-align:right;">-6.28%</div><div class="t" style="left:116px;top:716px;width:57px;text-align:right;">-6.56%</div><div class="t" style="left:176px;top:716px;width:57px;text-align:right;">-6.27%</div><div class="t" style="left:236px;top:716px;width:57px;text-align:right;">-0.28%</div><div class="t" style="left:296px;top:716px;width:57px;text-align:right;">0.01%</div><div class="t" style="left:5px;top:730px;width:48px;text-align:right;">2.92%</div><div class="t" style="left:56px;top:730px;width:57px;text-align:right;">-7.77%</div><div class="t" style="left:116px;top:730px;width:57px;text-align:right;">-8.21%</div><div class="t" style="left:176px;top:730px;width:57px;text-align:right;">-7.75%</div><div class="t" style="left:236px;top:730px;width:57px;text-align:right;">-0.44%</div><div class="t" style="left:296px;top:730px;width:57px;text-align:right;">0.02%</div><div class="t" style="left:5px;top:744px;width:48px;text-align:right;">3.50%</div><div class="t" style="left:56px;top:744px;width:57px;text-align:right;">-9.22%</div><div class="t" style="left:116px;top:744px;width:57px;text-align:right;">-9.85%</div><div class="t" style="left:176px;top:744px;width:57px;text-align:right;">-9.19%</div><div class="t" style="left:236px;top:744px;width:57px;text-align:right;">-0.62%</div><div class="t" style="left:296px;top:744px;width:57px;text-align:right;">0.04%</div>
<svg class="ch" style="left:698px;top:301px" width="384" height="237" viewBox="698 301 384 237"><rect x="698.5" y="301.5" width="383" height="236" fill="#fff" stroke="#868686" stroke-width="1"/><line x1="752" y1="312.5" x2="1056" y2="312.5" stroke="#dadada" stroke-width="1"/><line x1="752" y1="312.5" x2="1056" y2="312.5" stroke="#808080" stroke-width="1" stroke-dasharray="1 1"/><line x1="752" y1="352.5" x2="1056" y2="352.5" stroke="#dadada" stroke-width="1"/><line x1="752" y1="352.5" x2="1056" y2="352.5" stroke="#808080" stroke-width="1" stroke-dasharray="1 1"/><line x1="752" y1="391.5" x2="1056" y2="391.5" stroke="#dadada" stroke-width="1"/><line x1="752" y1="391.5" x2="1056" y2="391.5" stroke="#808080" stroke-width="1" stroke-dasharray="1 1"/><line x1="752" y1="431.5" x2="1056" y2="431.5" stroke="#dadada" stroke-width="1"/><line x1="752" y1="431.5" x2="1056" y2="431.5" stroke="#808080" stroke-width="1" stroke-dasharray="1 1"/><line x1="752" y1="470.5" x2="1056" y2="470.5" stroke="#dadada" stroke-width="1"/><line x1="752" y1="470.5" x2="1056" y2="470.5" stroke="#808080" stroke-width="1" stroke-dasharray="1 1"/><line x1="752.5" y1="312" x2="752.5" y2="511" stroke="#868686" stroke-width="1"/><line x1="748" y1="510.5" x2="1056" y2="510.5" stroke="#868686" stroke-width="1"/><line x1="748" y1="312.5" x2="752" y2="312.5" stroke="#868686" stroke-width="1"/><line x1="748" y1="352.5" x2="752" y2="352.5" stroke="#868686" stroke-width="1"/><line x1="748" y1="391.5" x2="752" y2="391.5" stroke="#868686" stroke-width="1"/><line x1="748" y1="431.5" x2="752" y2="431.5" stroke="#868686" stroke-width="1"/><line x1="748" y1="470.5" x2="752" y2="470.5" stroke="#868686" stroke-width="1"/><line x1="752.5" y1="510" x2="752.5" y2="514" stroke="#868686" stroke-width="1"/><line x1="795.5" y1="510" x2="795.5" y2="514" stroke="#868686" stroke-width="1"/><line x1="839.5" y1="510" x2="839.5" y2="514" stroke="#868686" stroke-width="1"/><line x1="882.5" y1="510" x2="882.5" y2="514" stroke="#868686" stroke-width="1"/><line x1="925.5" y1="510" x2="925.5" y2="514" stroke="#868686" stroke-width="1"/><line x1="968.5" y1="510" x2="968.5" y2="514" stroke="#868686" stroke-width="1"/><line x1="1012.5" y1="510" x2="1012.5" y2="514" stroke="#868686" stroke-width="1"/><line x1="1055.5" y1="510" x2="1055.5" y2="514" stroke="#868686" stroke-width="1"/><text transform="translate(740.00,315.50) scale(0.96,1)" font-size="10" text-anchor="end" fill="#000">1,100.0</text><text transform="translate(740.00,355.10) scale(0.96,1)" font-size="10" text-anchor="end" fill="#000">1,050.0</text><text transform="translate(740.00,394.70) scale(0.96,1)" font-size="10" text-anchor="end" fill="#000">1,000.0</text><text transform="translate(740.00,434.30) scale(0.96,1)" font-size="10" text-anchor="end" fill="#000">950.0</text><text transform="translate(740.00,473.90) scale(0.96,1)" font-size="10" text-anchor="end" fill="#000">900.0</text><text transform="translate(740.00,513.50) scale(0.96,1)" font-size="10" text-anchor="end" fill="#000">850.0</text><text transform="translate(752.50,528.00) scale(0.96,1)" font-size="10" text-anchor="middle" fill="#000">0.00%</text><text transform="translate(795.79,528.00) scale(0.96,1)" font-size="10" text-anchor="middle" fill="#000">1.00%</text><text transform="translate(839.08,528.00) scale(0.96,1)" font-size="10" text-anchor="middle" fill="#000">2.00%</text><text transform="translate(882.37,528.00) scale(0.96,1)" font-size="10" text-anchor="middle" fill="#000">3.00%</text><text transform="translate(925.66,528.00) scale(0.96,1)" font-size="10" text-anchor="middle" fill="#000">4.00%</text><text transform="translate(968.95,528.00) scale(0.96,1)" font-size="10" text-anchor="middle" fill="#000">5.00%</text><text transform="translate(1012.24,528.00) scale(0.96,1)" font-size="10" text-anchor="middle" fill="#000">6.00%</text><text transform="translate(1055.53,528.00) scale(0.96,1)" font-size="10" text-anchor="middle" fill="#000">7.00%</text><polyline points="752.50,335.23 777.75,349.57 803.00,363.50 828.26,377.13 853.51,390.43 878.76,403.50 904.01,416.17 929.27,428.69 954.52,440.80 979.77,452.76 1005.02,464.41 1030.28,475.81 1055.53,486.98" fill="none" stroke="#5b9bd5" stroke-width="2.5" stroke-linejoin="round"/><polyline points="752.50,340.62 777.75,353.21 803.00,365.80 828.26,378.39 853.51,390.99 878.76,403.58 904.01,416.17 929.27,428.77 954.52,441.36 979.77,453.95 1005.02,466.62 1030.28,479.22 1055.53,491.81" fill="none" stroke="#c55a11" stroke-width="2.25" stroke-linejoin="round"/><polyline points="752.50,335.55 777.75,349.72 803.00,363.58 828.26,377.13 853.51,390.43 878.76,403.50 904.01,416.17 929.27,428.69 954.52,440.80 979.77,452.76 1005.02,464.33 1030.28,475.65 1055.53,486.74" fill="none" stroke="#a5a5a5" stroke-width="2.5" stroke-linejoin="round"/><path d="M904.0,413.8 L906.4,416.2 L904.0,418.6 L901.6,416.2Z" fill="#000" stroke="#ffc000" stroke-width="1.3"/></svg><svg class="ch" style="left:405px;top:563px" width="456" height="275" viewBox="405 563 456 275"><rect x="405.5" y="563.5" width="455" height="279" fill="#fff" stroke="#868686" stroke-width="1"/><line x1="460" y1="589.5" x2="800" y2="589.5" stroke="#dadada" stroke-width="1"/><line x1="460" y1="589.5" x2="800" y2="589.5" stroke="#808080" stroke-width="1" stroke-dasharray="1 1"/><line x1="460" y1="619.5" x2="800" y2="619.5" stroke="#dadada" stroke-width="1"/><line x1="460" y1="619.5" x2="800" y2="619.5" stroke="#808080" stroke-width="1" stroke-dasharray="1 1"/><line x1="460" y1="650.5" x2="800" y2="650.5" stroke="#dadada" stroke-width="1"/><line x1="460" y1="650.5" x2="800" y2="650.5" stroke="#808080" stroke-width="1" stroke-dasharray="1 1"/><line x1="460" y1="711.5" x2="800" y2="711.5" stroke="#dadada" stroke-width="1"/><line x1="460" y1="711.5" x2="800" y2="711.5" stroke="#808080" stroke-width="1" stroke-dasharray="1 1"/><line x1="460" y1="742.5" x2="800" y2="742.5" stroke="#dadada" stroke-width="1"/><line x1="460" y1="742.5" x2="800" y2="742.5" stroke="#808080" stroke-width="1" stroke-dasharray="1 1"/><line x1="460" y1="772.5" x2="800" y2="772.5" stroke="#dadada" stroke-width="1"/><line x1="460" y1="772.5" x2="800" y2="772.5" stroke="#808080" stroke-width="1" stroke-dasharray="1 1"/><line x1="460" y1="680.5" x2="801" y2="680.5" stroke="#868686" stroke-width="1"/><line x1="460.5" y1="680" x2="460.5" y2="683" stroke="#868686" stroke-width="1"/><line x1="508.5" y1="680" x2="508.5" y2="683" stroke="#868686" stroke-width="1"/><line x1="557.5" y1="680" x2="557.5" y2="683" stroke="#868686" stroke-width="1"/><line x1="606.5" y1="680" x2="606.5" y2="683" stroke="#868686" stroke-width="1"/><line x1="654.5" y1="680" x2="654.5" y2="683" stroke="#868686" stroke-width="1"/><line x1="702.5" y1="680" x2="702.5" y2="683" stroke="#868686" stroke-width="1"/><line x1="751.5" y1="680" x2="751.5" y2="683" stroke="#868686" stroke-width="1"/><line x1="800.5" y1="680" x2="800.5" y2="683" stroke="#868686" stroke-width="1"/><line x1="630.5" y1="588.5" x2="630.5" y2="773" stroke="#868686" stroke-width="1"/><line x1="800.5" y1="588.5" x2="800.5" y2="773" stroke="#868686" stroke-width="1"/><line x1="800" y1="588.5" x2="803" y2="588.5" stroke="#868686" stroke-width="1"/><line x1="800" y1="611.5" x2="803" y2="611.5" stroke="#868686" stroke-width="1"/><line x1="800" y1="634.5" x2="803" y2="634.5" stroke="#868686" stroke-width="1"/><line x1="800" y1="657.5" x2="803" y2="657.5" stroke="#868686" stroke-width="1"/><line x1="800" y1="680.5" x2="803" y2="680.5" stroke="#868686" stroke-width="1"/><line x1="800" y1="703.5" x2="803" y2="703.5" stroke="#868686" stroke-width="1"/><line x1="800" y1="726.5" x2="803" y2="726.5" stroke="#868686" stroke-width="1"/><line x1="800" y1="749.5" x2="803" y2="749.5" stroke="#868686" stroke-width="1"/><line x1="800" y1="772.5" x2="803" y2="772.5" stroke="#868686" stroke-width="1"/><text transform="translate(453.50,591.60) scale(0.9,1)" font-size="8.5" text-anchor="end" fill="#000">12.0%</text><text transform="translate(453.50,622.10) scale(0.9,1)" font-size="8.5" text-anchor="end" fill="#000">8.0%</text><text transform="translate(453.50,652.60) scale(0.9,1)" font-size="8.5" text-anchor="end" fill="#000">4.0%</text><text transform="translate(453.50,683.10) scale(0.9,1)" font-size="8.5" text-anchor="end" fill="#000">0.0%</text><text transform="translate(453.50,713.60) scale(0.9,1)" font-size="8.5" text-anchor="end" fill="#000">-4.0%</text><text transform="translate(453.50,744.10) scale(0.9,1)" font-size="8.5" text-anchor="end" fill="#000">-8.0%</text><text transform="translate(453.50,774.60) scale(0.9,1)" font-size="8.5" text-anchor="end" fill="#000">-12.0%</text><text transform="translate(808.00,591.60) scale(0.9,1)" font-size="8.5" text-anchor="start" fill="#000">0.80%</text><text transform="translate(808.00,614.48) scale(0.9,1)" font-size="8.5" text-anchor="start" fill="#000">0.60%</text><text transform="translate(808.00,637.35) scale(0.9,1)" font-size="8.5" text-anchor="start" fill="#000">0.40%</text><text transform="translate(808.00,660.23) scale(0.9,1)" font-size="8.5" text-anchor="start" fill="#000">0.20%</text><text transform="translate(808.00,683.10) scale(0.9,1)" font-size="8.5" text-anchor="start" fill="#000">0.00%</text><text transform="translate(808.00,705.98) scale(0.9,1)" font-size="8.5" text-anchor="start" fill="#000">-0.20%</text><text transform="translate(808.00,728.85) scale(0.9,1)" font-size="8.5" text-anchor="start" fill="#000">-0.40%</text><text transform="translate(808.00,751.73) scale(0.9,1)" font-size="8.5" text-anchor="start" fill="#000">-0.60%</text><text transform="translate(808.00,774.60) scale(0.9,1)" font-size="8.5" text-anchor="start" fill="#000">-0.80%</text><text transform="translate(460.50,786.00) scale(0.9,1)" font-size="8.5" text-anchor="middle" fill="#000">-3.50%</text><text transform="translate(509.00,786.00) scale(0.9,1)" font-size="8.5" text-anchor="middle" fill="#000">-2.50%</text><text transform="translate(557.50,786.00) scale(0.9,1)" font-size="8.5" text-anchor="middle" fill="#000">-1.50%</text><text transform="translate(606.00,786.00) scale(0.9,1)" font-size="8.5" text-anchor="middle" fill="#000">-0.50%</text><text transform="translate(654.50,786.00) scale(0.9,1)" font-size="8.5" text-anchor="middle" fill="#000">0.50%</text><text transform="translate(703.00,786.00) scale(0.9,1)" font-size="8.5" text-anchor="middle" fill="#000">1.50%</text><text transform="translate(751.50,786.00) scale(0.9,1)" font-size="8.5" text-anchor="middle" fill="#000">2.50%</text><text transform="translate(800.00,786.00) scale(0.9,1)" font-size="8.5" text-anchor="middle" fill="#000">3.50%</text><text x="625.3" y="804" font-size="9" font-weight="bold" text-anchor="middle" textLength="66.6" lengthAdjust="spacingAndGlyphs" fill="#000">% Yield Change</text><text transform="translate(423.7,680.5) rotate(-90)" x="0" y="0" font-size="9" font-weight="bold" text-anchor="middle" textLength="61" lengthAdjust="spacingAndGlyphs" fill="#000">% Price Change</text><text transform="translate(843,692.2) rotate(-90)" x="0" y="0" font-size="9" font-weight="bold" text-anchor="middle" textLength="85.5" lengthAdjust="spacingAndGlyphs" fill="#000">Estimation Difference</text><polyline points="460.50,600.06 488.79,614.24 517.08,628.12 545.38,641.69 573.67,654.88 601.96,667.84 630.25,680.50 658.54,692.85 686.83,704.98 715.12,716.79 743.42,728.38 771.71,739.75 800.00,750.80" fill="none" stroke="#000" stroke-width="2.1" stroke-linejoin="round" stroke-linecap="round"/><path d="M460.50,757.74 L464.00,764.89 L457.00,764.89Z" fill="#a5a5a5"/><path d="M488.79,732.57 L492.29,739.73 L485.29,739.73Z" fill="#a5a5a5"/><path d="M517.08,711.99 L520.58,719.14 L513.58,719.14Z" fill="#a5a5a5"/><path d="M545.38,697.12 L548.88,704.27 L541.88,704.27Z" fill="#a5a5a5"/><path d="M573.67,685.68 L577.17,692.83 L570.17,692.83Z" fill="#a5a5a5"/><path d="M601.96,679.96 L605.46,687.11 L598.46,687.11Z" fill="#a5a5a5"/><path d="M630.25,677.67 L633.75,684.83 L626.75,684.83Z" fill="#a5a5a5"/><path d="M658.54,679.96 L662.04,687.11 L655.04,687.11Z" fill="#a5a5a5"/><path d="M686.83,685.68 L690.33,692.83 L683.33,692.83Z" fill="#a5a5a5"/><path d="M715.12,695.97 L718.62,703.12 L711.62,703.12Z" fill="#a5a5a5"/><path d="M743.42,709.70 L746.92,716.85 L739.92,716.85Z" fill="#a5a5a5"/><path d="M771.71,728.00 L775.21,735.15 L768.21,735.15Z" fill="#a5a5a5"/><path d="M800.00,748.59 L803.50,755.74 L796.50,755.74Z" fill="#a5a5a5"/><path d="M460.50,682.98 L462.60,685.08 L460.50,687.18 L458.40,685.08Z" fill="#4472c4" stroke="#ed7d31" stroke-width="1.1"/><path d="M488.79,680.69 L490.89,682.79 L488.79,684.89 L486.69,682.79Z" fill="#4472c4" stroke="#ed7d31" stroke-width="1.1"/><path d="M517.08,679.54 L519.18,681.64 L517.08,683.74 L514.98,681.64Z" fill="#4472c4" stroke="#ed7d31" stroke-width="1.1"/><path d="M545.38,678.40 L547.48,680.50 L545.38,682.60 L543.27,680.50Z" fill="#4472c4" stroke="#ed7d31" stroke-width="1.1"/><path d="M573.67,678.40 L575.77,680.50 L573.67,682.60 L571.57,680.50Z" fill="#4472c4" stroke="#ed7d31" stroke-width="1.1"/><path d="M601.96,678.40 L604.06,680.50 L601.96,682.60 L599.86,680.50Z" fill="#4472c4" stroke="#ed7d31" stroke-width="1.1"/><path d="M630.25,678.40 L632.35,680.50 L630.25,682.60 L628.15,680.50Z" fill="#4472c4" stroke="#ed7d31" stroke-width="1.1"/><path d="M658.54,678.40 L660.64,680.50 L658.54,682.60 L656.44,680.50Z" fill="#4472c4" stroke="#ed7d31" stroke-width="1.1"/><path d="M686.83,678.40 L688.93,680.50 L686.83,682.60 L684.73,680.50Z" fill="#4472c4" stroke="#ed7d31" stroke-width="1.1"/><path d="M715.12,678.40 L717.23,680.50 L715.12,682.60 L713.02,680.50Z" fill="#4472c4" stroke="#ed7d31" stroke-width="1.1"/><path d="M743.42,677.26 L745.52,679.36 L743.42,681.46 L741.32,679.36Z" fill="#4472c4" stroke="#ed7d31" stroke-width="1.1"/><path d="M771.71,676.11 L773.81,678.21 L771.71,680.31 L769.61,678.21Z" fill="#4472c4" stroke="#ed7d31" stroke-width="1.1"/><path d="M800.00,673.82 L802.10,675.92 L800.00,678.02 L797.90,675.92Z" fill="#4472c4" stroke="#ed7d31" stroke-width="1.1"/><line x1="422" y1="826.6" x2="444" y2="826.6" stroke="#000" stroke-width="2.1"/><text x="446" y="828.6" font-size="9" textLength="61" lengthAdjust="spacingAndGlyphs" fill="#000">% Price Change</text><path d="M530.00,823.15 L533.00,829.35 L527.00,829.35Z" fill="#a5a5a5"/><text x="543" y="828.6" font-size="9" textLength="78" lengthAdjust="spacingAndGlyphs" fill="#000">Duration Difference</text><path d="M644.50,824.00 L646.90,826.40 L644.50,828.80 L642.10,826.40Z" fill="#4472c4" stroke="#ed7d31" stroke-width="1.1"/><text x="657.6" y="828.6" font-size="9" textLength="122.3" lengthAdjust="spacingAndGlyphs" fill="#000">Duration+Convexity Difference</text></svg>
</body></html>
